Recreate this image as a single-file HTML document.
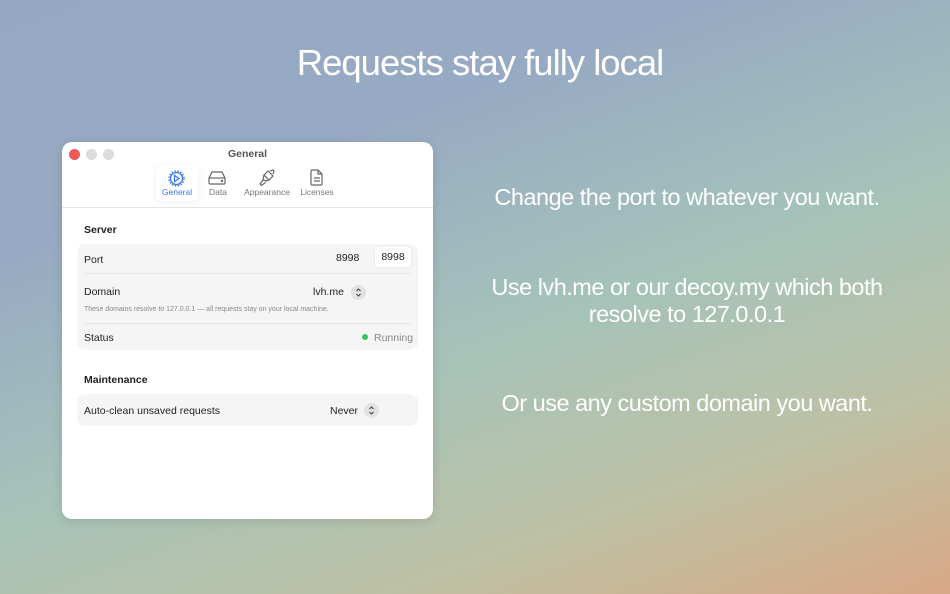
<!DOCTYPE html>
<html><head><meta charset="utf-8"><style>
*{margin:0;padding:0;box-sizing:border-box}
body{width:950px;height:594px;overflow:hidden;font-family:"Liberation Sans",sans-serif;position:relative;
background:linear-gradient(160deg,#96a7c4 0%,#97aac3 28%,#a5c3b9 55%,#bdc1a5 78%,#d8a886 100%);}
.h{position:absolute;left:0;width:960px;top:42px;text-align:center;color:#fff;font-size:36.5px;letter-spacing:-1px;white-space:nowrap}
.r{position:absolute;left:460px;width:454px;text-align:center;color:#fff;font-size:23.5px;letter-spacing:-0.5px;line-height:27px}
.win{position:absolute;left:62px;top:142px;width:371px;height:377px;background:#fff;border-radius:10px;box-shadow:0 2px 10px rgba(0,0,0,.12)}
.dot{position:absolute;top:7px;width:11px;height:11px;border-radius:50%}
.title{position:absolute;top:6px;left:0;width:371px;text-align:center;font-size:10.5px;font-weight:bold;color:#555}
.tb{position:absolute;top:65px;left:0;width:371px;border-top:1px solid #e4e4e4}
.tab{position:absolute;top:45px;font-size:8.5px;color:#777;text-align:center}
.sel{position:absolute;left:94px;top:23px;width:42px;height:36px;background:#fff;border-radius:6px;box-shadow:0 1px 6px rgba(0,0,0,.08)}
.lbl{position:absolute;left:22px;font-size:10.5px;font-weight:bold;color:#222}
.box{position:absolute;left:15px;width:341px;background:#f5f5f5;border-radius:8px}
.t{position:absolute;font-size:10.5px;color:#222}
.div{position:absolute;left:7px;right:7px;border-top:1px solid #e6e6e6}
.step{position:absolute;width:15px;height:15px;border-radius:50%;background:#e2e2e2}
</style></head><body>
<div class="h">Requests stay fully local</div>
<div class="r" style="top:184px">Change the port to whatever you want.</div>
<div class="r" style="top:274px">Use lvh.me or our decoy.my which both<br>resolve to 127.0.0.1</div>
<div class="r" style="top:390px">Or use any custom domain you want.</div>
<div class="win">
<div class="dot" style="left:7px;background:#ee5a5a"></div>
<div class="dot" style="left:24px;background:#dcdcdc"></div>
<div class="dot" style="left:41px;background:#dcdcdc"></div>
<div class="title">General</div>
<div class="sel"></div>
<svg style="position:absolute;left:106px;top:28px" width="17" height="17" viewBox="0 0 17 17" fill="none" stroke="#3b78e0" stroke-width="1.3"><circle cx="8.5" cy="8.5" r="6"/><circle cx="8.5" cy="8.5" r="7.5" stroke-dasharray="1.5 1.5"/><path d="M6.5 5.5L11 8.5L6.5 11.5Z"/></svg>
<div class="tab" style="left:96px;width:38px;color:#3b78e0">General</div>
<svg style="position:absolute;left:146px;top:29px" width="18" height="14" viewBox="0 0 18 14" fill="none" stroke="#666" stroke-width="1.2"><path d="M4 1h10l3 6v5a1 1 0 0 1-1 1H2a1 1 0 0 1-1-1V7z"/><path d="M1 7h16"/><circle cx="14" cy="10" r=".6" fill="#666"/></svg>
<div class="tab" style="left:140px;width:32px">Data</div>
<svg style="position:absolute;left:196px;top:27px" width="17" height="18" viewBox="0 0 17 18" fill="none" stroke="#666" stroke-width="1.2"><path d="M10 2l5 5-4 4-5-5z"/><path d="M6 6l-1 5 3 1 3-1"/><path d="M5 11l-3 4 1.5 1.5 4-3"/><path d="M12 2l3-1 1 1-1 3"/></svg>
<div class="tab" style="left:178px;width:54px">Appearance</div>
<svg style="position:absolute;left:248px;top:27px" width="14" height="17" viewBox="0 0 14 17" fill="none" stroke="#666" stroke-width="1.2"><path d="M2 1h6l4 4v10a1 1 0 0 1-1 1H2a1 1 0 0 1-1-1V2a1 1 0 0 1 1-1z"/><path d="M8 1v4h4M4 9h6M4 12h6"/></svg>
<div class="tab" style="left:236px;width:38px">Licenses</div>
<div class="tb"></div>
<div class="lbl" style="top:82px">Server</div>
<div class="box" style="top:102px;height:106px">
<div class="t" style="left:7px;top:10px">Port</div>
<div class="t" style="left:259px;top:8px">8998</div>
<div style="position:absolute;left:298px;top:3px;width:36px;height:20px;background:#fff;border-radius:4px;box-shadow:0 0 2px rgba(0,0,0,.1);font-size:10.5px;line-height:20px;text-align:center;color:#222">8998</div>
<div class="div" style="top:29px"></div>
<div class="t" style="left:7px;top:42px">Domain</div>
<div class="t" style="left:236px;top:42px">lvh.me</div>
<div class="step" style="left:274px;top:41px"><svg width="15" height="15" viewBox="0 0 15 15" fill="none" stroke="#444" stroke-width="1.1"><path d="M5.5 6l2-2 2 2M5.5 9l2 2 2-2"/></svg></div>
<div class="t" style="left:7px;top:62px;font-size:7px;color:#888">These domains resolve to 127.0.0.1 — all requests stay on your local machine.</div>
<div class="div" style="top:79px"></div>
<div style="position:absolute;left:285px;top:90px;width:6px;height:6px;border-radius:50%;background:#34c759"></div>
<div class="t" style="left:7px;top:88px">Status</div>
<div class="t" style="left:297px;top:88px;color:#888">Running</div>
</div>
<div class="lbl" style="top:232px">Maintenance</div>
<div class="box" style="top:252px;height:32px">
<div class="t" style="left:7px;top:11px">Auto-clean unsaved requests</div>
<div class="t" style="left:253px;top:11px">Never</div>
<div class="step" style="left:287px;top:9px"><svg width="15" height="15" viewBox="0 0 15 15" fill="none" stroke="#444" stroke-width="1.1"><path d="M5.5 6l2-2 2 2M5.5 9l2 2 2-2"/></svg></div>
</div>
</div>
</body></html>
